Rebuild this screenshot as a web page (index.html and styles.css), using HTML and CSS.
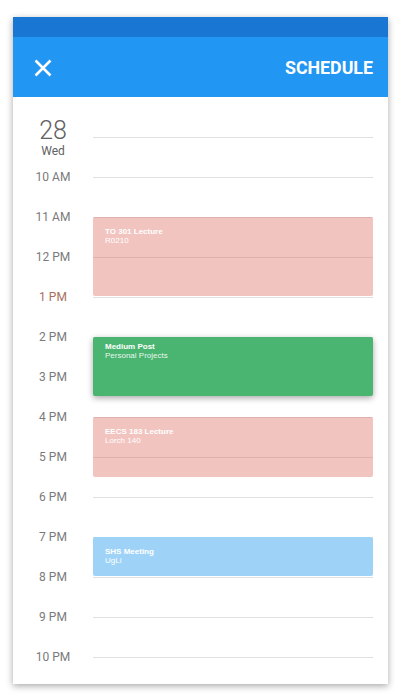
FILE: index.html
```html
<!DOCTYPE html>
<html>
<head>
<meta charset="utf-8">
<link rel="stylesheet" href="styles.css">
</head>
<body>
<div class="card">
  <div class="status"></div>
  <header class="appbar">
    <svg class="close" width="18" height="18" viewBox="0 0 18 18"><path d="M1.5 1.5 L16.5 16.5 M16.5 1.5 L1.5 16.5" stroke="#fff" stroke-width="2.6" fill="none"/></svg>
    <span class="title">SCHEDULE</span>
  </header>
  <main class="content">
    <div class="grid">
      <div class="row date-row"><div class="label date"><span class="day">28</span><span class="wd">Wed</span></div><div class="line"></div></div>
      <div class="row"><div class="label">10 AM</div><div class="line"></div></div>
      <div class="row"><div class="label">11 AM</div><div class="line"></div></div>
      <div class="row"><div class="label">12 PM</div><div class="line"></div></div>
      <div class="row"><div class="label now">1 PM</div><div class="line"></div></div>
      <div class="row"><div class="label">2 PM</div><div class="line"></div></div>
      <div class="row"><div class="label">3 PM</div><div class="line"></div></div>
      <div class="row"><div class="label">4 PM</div><div class="line"></div></div>
      <div class="row"><div class="label">5 PM</div><div class="line"></div></div>
      <div class="row"><div class="label">6 PM</div><div class="line"></div></div>
      <div class="row"><div class="label">7 PM</div><div class="line"></div></div>
      <div class="row"><div class="label">8 PM</div><div class="line"></div></div>
      <div class="row"><div class="label">9 PM</div><div class="line"></div></div>
      <div class="row"><div class="label">10 PM</div><div class="line"></div></div>

      <div class="event pink" style="top:100px;height:79px"><b>TO 301 Lecture</b><span>R0210</span></div>
      <div class="event green" style="top:220px;height:59px"><b>Medium Post</b><span>Personal Projects</span></div>
      <div class="event pink" style="top:300px;height:60px"><b>EECS 183 Lecture</b><span>Lorch 140</span></div>
      <div class="event blue" style="top:420px;height:39px"><b>SHS Meeting</b><span>UgLi</span></div>
    </div>
  </main>
</div>
</body>
</html>
```
FILE: styles.css
```css
html, body {
  margin: 0;
  padding: 0;
  background: #fff;
}
body {
  font-family: Roboto, "Liberation Sans", sans-serif;
}
.card {
  margin: 17px 12px 16px 13px;
  width: 375px;
  height: 667px;
  background: #fff;
  box-shadow: 0 2px 7px rgba(0,0,0,0.35);
  display: flex;
  flex-direction: column;
  overflow: hidden;
}
.status {
  height: 20px;
  background: #1976d2;
  flex: none;
}
.appbar {
  height: 60px;
  background: #2196f3;
  flex: none;
  display: flex;
  align-items: center;
  justify-content: space-between;
  padding: 0 15px 0 21px;
  box-sizing: border-box;
}
.close {
  display: block;
  margin-top: 1px;
}
.title {
  color: #fff;
  font-weight: 700;
  font-size: 17.8px;
  margin-top: 1px;
}
.content {
  flex: 1;
  padding-top: 20px;
}
.grid {
  position: relative;
}
.row {
  height: 40px;
  display: flex;
  align-items: center;
}
.label {
  width: 80px;
  text-align: center;
  font-size: 12px;
  color: #7a7a7a;
  flex: none;
}
.label.now {
  color: #a86f5c;
}
.date {
  display: flex;
  flex-direction: column;
  align-items: center;
  align-self: flex-start;
  margin-top: 1px;
}
.day {
  font-size: 25px;
  line-height: 26px;
  color: #616161;
  font-weight: 300;
}
.wd {
  font-size: 12px;
  line-height: 12px;
  color: #616161;
  margin-top: 1px;
}
.line {
  flex: 1;
  height: 1px;
  background: #e0e0e0;
  margin-right: 15px;
}
.event {
  position: absolute;
  left: 80px;
  right: 15px;
  box-sizing: border-box;
  padding: 10px 12px 0;
  border-radius: 2px;
  color: #fff;
  font-family: "Liberation Sans", Arial, sans-serif;
  font-size: 8px;
  line-height: 9px;
  display: flex;
  flex-direction: column;
}
.event b {
  font-weight: 700;
}
.pink {
  background: rgba(222,107,97,0.4);
}
.green {
  background: #49b571;
  padding-top: 5px;
  box-shadow: 0 2px 6px rgba(0,0,0,0.35);
}
.green span {
  color: rgba(255,255,255,0.9);
}
.blue {
  background: #9ed3f7;
}
```
